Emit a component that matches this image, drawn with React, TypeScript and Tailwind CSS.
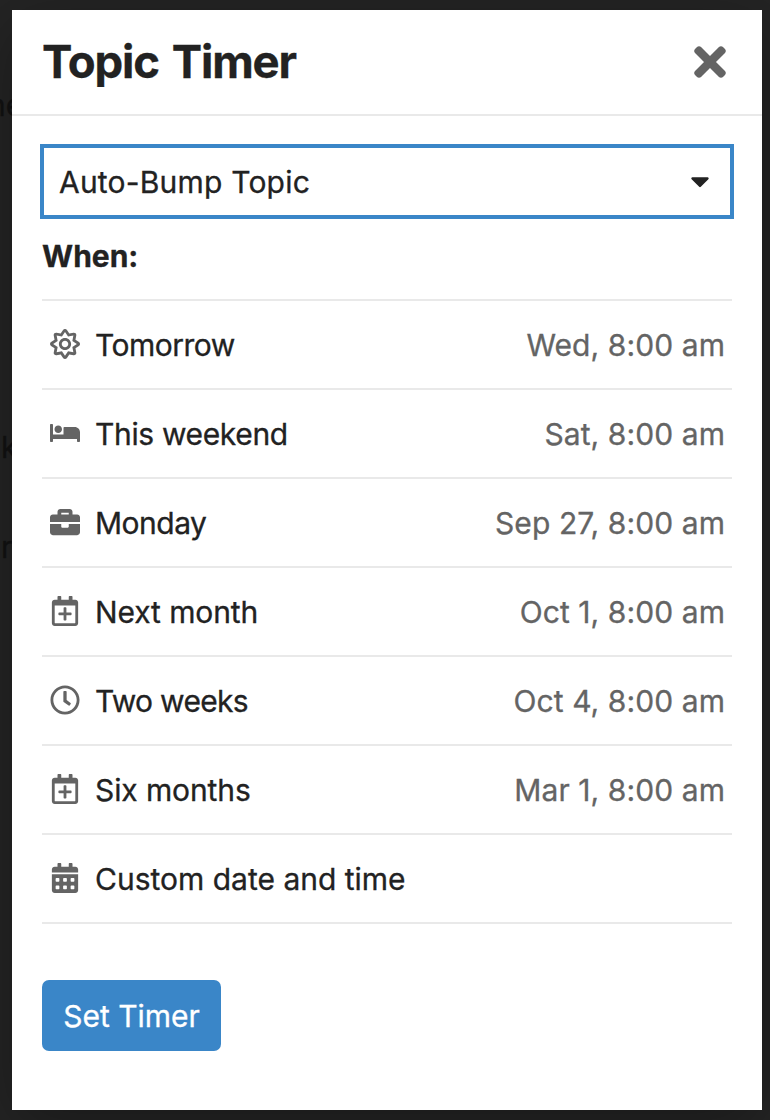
import type { IconType } from "react-icons";
import {
  FaBed,
  FaBriefcase,
  FaCalendarAlt,
  FaCaretDown,
  FaRegCalendarPlus,
  FaRegClock,
  FaRegSun,
  FaTimes,
} from "react-icons/fa";

type Shortcut = {
  icon: IconType;
  label: string;
  tracking?: string;
  time?: string;
};

const shortcuts: Shortcut[] = [
  {
    icon: FaRegSun,
    label: "Tomorrow",
    tracking: "tracking-[-0.5px]",
    time: "Wed, 8:00 am",
  },
  {
    icon: FaBed,
    label: "This weekend",
    tracking: "tracking-[-0.35px]",
    time: "Sat, 8:00 am",
  },
  {
    icon: FaBriefcase,
    label: "Monday",
    tracking: "tracking-[-0.5px]",
    time: "Sep 27, 8:00 am",
  },
  {
    icon: FaRegCalendarPlus,
    label: "Next month",
    tracking: "tracking-[-0.1px]",
    time: "Oct 1, 8:00 am",
  },
  {
    icon: FaRegClock,
    label: "Two weeks",
    tracking: "tracking-[-0.7px]",
    time: "Oct 4, 8:00 am",
  },
  {
    icon: FaRegCalendarPlus,
    label: "Six months",
    tracking: "tracking-[-0.1px]",
    time: "Mar 1, 8:00 am",
  },
  { icon: FaCalendarAlt, label: "Custom date and time" },
];

function ShortcutRow({ icon: Icon, label, tracking, time }: Shortcut) {
  return (
    <li className="h-[89px] border-b-2 border-[#e9e9e9]">
      <button
        type="button"
        className="flex h-full w-full items-center pr-[7px] pl-2 text-left"
      >
        <Icon className="mr-[15px] size-[30px] shrink-0 -translate-y-px text-[#646464]" />
        <span className={`grow ${tracking ?? ""}`}>{label}</span>
        {time ? (
          <span className="tracking-[0.08px] text-[#646464]">{time}</span>
        ) : null}
      </button>
    </li>
  );
}

// Dimmed page text that peeks out at the left of the modal
function PageBehind() {
  return (
    <div
      aria-hidden="true"
      className="absolute inset-y-0 left-0 w-3 overflow-hidden text-[30px] leading-9 text-[#121212]"
    >
      <span className="absolute top-[87px] -left-[12px]">ne</span>
      <span className="absolute top-[429px] left-px">k</span>
      <span className="absolute top-[529px] left-px">r</span>
    </div>
  );
}

export default function App() {
  return (
    <div className="relative h-[1120px] w-[770px] overflow-hidden bg-[#242424] pt-2.5 pl-3 font-[Inter,sans-serif] text-[30px] leading-9 text-[#222] [-webkit-text-stroke:0.3px]">
      <PageBehind />

      <div
        role="dialog"
        aria-labelledby="modal-title"
        className="relative flex h-[1100px] w-[750px] flex-col bg-white shadow-[0_16px_60px_rgba(0,0,0,0.3)]"
      >
        <header className="flex h-[106px] shrink-0 items-center justify-between border-b-2 border-[#e9e9e9] pr-[29px] pl-[30px]">
          <h1
            id="modal-title"
            className="text-[45.5px] leading-none font-bold tracking-[-1.1px] [word-spacing:3px]"
          >
            Topic Timer
          </h1>
          <button type="button" aria-label="Close" className="text-[#646464]">
            <FaTimes className="size-[46px]" />
          </button>
        </header>

        <div className="flex flex-col px-[30px] pt-7">
          <button
            type="button"
            className="-mx-0.5 flex h-[75px] items-center justify-between border-4 border-[#3a86c8] px-[15px] text-left"
          >
            <span className="tracking-[0.2px]">Auto-Bump Topic</span>
            <FaCaretDown className="size-[30px] -translate-y-px" />
          </button>

          <p className="mt-[19px] font-bold">When:</p>

          <ul className="mt-[25px] border-t-2 border-[#e9e9e9]">
            {shortcuts.map((shortcut) => (
              <ShortcutRow key={shortcut.label} {...shortcut} />
            ))}
          </ul>

          <button
            type="button"
            className="mt-14 h-[71px] w-[179px] rounded-[7px] bg-[#3a86c8] text-white"
          >
            Set Timer
          </button>
        </div>
      </div>
    </div>
  );
}
